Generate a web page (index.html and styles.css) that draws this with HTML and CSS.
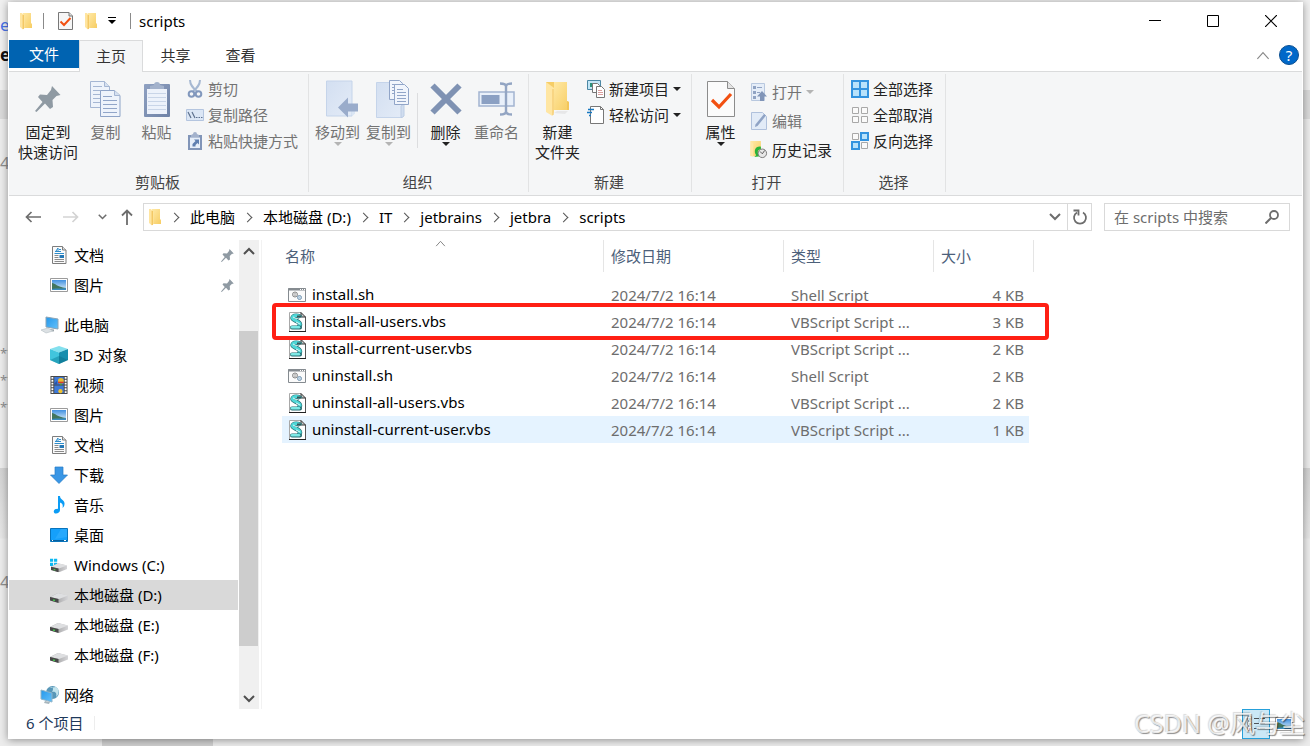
FILE: index.html
```html
<!DOCTYPE html>
<html lang="zh-CN">
<head>
    <meta charset="UTF-8">
    <meta name="viewport" content="width=device-width, initial-scale=1.0">
    <title>scripts</title>
    <link rel="stylesheet" href="styles.css">
</head>
<body>
    <!-- Icon definitions -->
    <svg class="defs" width="0" height="0" aria-hidden="true">
        <defs>
            <linearGradient id="gold" x1="0" y1="0" x2="1" y2="1"><stop offset="0" stop-color="#ffe9a6"/><stop offset="1" stop-color="#f7cd63"/></linearGradient>
            <linearGradient id="pale" x1="0" y1="0" x2="1" y2="1"><stop offset="0" stop-color="#d3dff1"/><stop offset="1" stop-color="#e3ebf7"/></linearGradient>
            <linearGradient id="slate" x1="0" y1="0" x2="1" y2="1"><stop offset="0" stop-color="#8fa1c2"/><stop offset="1" stop-color="#6f82a6"/></linearGradient>
            <linearGradient id="screen" x1="0" y1="0" x2="1" y2="1"><stop offset="0" stop-color="#2497ea"/><stop offset="1" stop-color="#63c1fb"/></linearGradient>
            <linearGradient id="sky" x1="0" y1="0" x2="0" y2="1"><stop offset="0" stop-color="#3f8fe0"/><stop offset="1" stop-color="#dff1fa"/></linearGradient>
            <linearGradient id="drive" x1="0" y1="0" x2="1" y2="0"><stop offset="0" stop-color="#8d8d8d"/><stop offset="1" stop-color="#d5d5d8"/></linearGradient>
        </defs>
        <symbol id="folder" viewBox="0 0 14 18">
            <path d="M4 1h8v10.500h1V16H5z" fill="#f8d36f"/>
            <path d="M4 1h8v11l1 1v3H5z" fill="url(#gold)"/>
            <path d="M1 1h2l2.500 3v12L4 17.500 1 15z" fill="#ffe5a0"/>
            <path d="M4.200 3v14" stroke="#eebc4b" stroke-width="1"/>
        </symbol>
        <symbol id="folder-large" viewBox="0 0 24 36">
            <path d="M7 1h14v19l2 1v8H8z" fill="url(#gold)"/>
            <path d="M21 20l2 1v8h-2z" fill="#f3c65a"/>
            <path d="M0 1h1l7 6v24l-1.500 4L0 31z" fill="#ffe6a3"/>
            <path d="M0 1h8v6z" fill="#f6cd66"/>
            <path d="M7 8v26" stroke="#f1c463"/>
            <path d="M8 32l3-2h11l-3 3z" fill="#ddd" opacity=".6"/>
        </symbol>
        <symbol id="doc-check" viewBox="0 0 28 36">
            <path d="M.5.5h20l7 7v28H.5z" fill="#fbfbfb" stroke="#8c8c8c"/>
            <path d="M20.500.5v7h7" fill="#e4e4e4" stroke="#8c8c8c"/>
            <path d="M5 19l7 7L24 13" fill="none" stroke="#f25011" stroke-width="3.200"/>
        </symbol>
        <symbol id="doc-check-small" viewBox="0 0 15 18">
            <path d="M.5.5H11l3.500 3.500v13.500H.5z" fill="#f6f6f6" stroke="#777"/>
            <path d="M11 .5V4h3.500" fill="#ddd" stroke="#777"/>
            <path d="M2.500 9.500l3.500 3.500 6.500-7" fill="none" stroke="#f25011" stroke-width="2"/>
        </symbol>
        <symbol id="pin" viewBox="0 0 26 26">
            <path d="M17 0l8.500 9-4 1-4 4 .5 7-3 2-5-5.500L1.500 26 0 25l7.500-9L3 11l2-2.500 7 .5 4-5z" fill="#8f9aa3"/>
        </symbol>
        <symbol id="copy" viewBox="0 0 31 36">
            <g fill="#eef3fb" stroke="#a5b6d3">
                <path d="M.5.5h14l5 5v21H.5z"/><path d="M14.500.5v5h5" fill="#d5e0f0"/>
                <path d="M3 5.500h9M3 9.500h13M3 13.500h13M3 17.500h13M3 21.500h13"/>
                <path d="M10.500 9.500h14l5.500 5v21H10.500z" stroke="#8ea3c7"/><path d="M24.500 9.500v5H30" fill="#d5e0f0"/>
                <path d="M13 15.500h9M13 19.500h14M13 23.500h14M13 27.500h14M13 31.500h14" stroke="#91a5c8"/>
            </g>
        </symbol>
        <symbol id="paste" viewBox="0 0 26 36">
            <rect y="3" width="26" height="33" rx="1" fill="url(#slate)"/>
            <path d="M3 8h20v25H3z" fill="#edf2fb"/>
            <path d="M4 12.500h18M4 16.500h18M4 20.500h18M4 24.500h18M4 28.500h18" stroke="#c9d5e8"/>
            <path d="M6 8V5l4-1a3 3 0 0 1 6 0l4 1v3z" fill="#a3b2cc"/>
        </symbol>
        <symbol id="cut" viewBox="0 0 16 18">
            <path d="M3 0c0 5 3 8 7.500 12M13 0c0 5-3 8-7.500 12" fill="none" stroke="#a6b8d2" stroke-width="2"/>
            <g fill="none" stroke="#8298bd" stroke-width="2"><circle cx="4.500" cy="14" r="2.800"/><circle cx="11.500" cy="14" r="2.800"/></g>
        </symbol>
        <symbol id="path" viewBox="0 0 18 12">
            <path d="M.5.5h17v11H.5z" fill="#dbe6f5" stroke="#b4c5df"/>
            <path d="M2 3l3 6M6 3l3 6M10 8.500h1.500M12.500 8.500H14M15 8.500h1.500" stroke="#5e718f" stroke-width="1.200"/>
        </symbol>
        <symbol id="shortcut" viewBox="0 0 14 18">
            <path d="M0 3h14v15H0z" fill="#8195b8"/><path d="M2 5.500h10V16H2z" fill="#e6eef9"/>
            <path d="M3 5V3l2-1a2 2 0 0 1 4 0l2 1v2z" fill="#a3b2cc"/>
            <path d="M4.500 14.500V12l3-3L6 7.500h5v5L9.500 11l-2 2v1.500z" fill="#5f7fb0"/>
        </symbol>
        <symbol id="move-to" viewBox="-8 0 40 37">
            <path d="M.5.500H26v35H.5z" fill="url(#pale)" stroke="#c5d4ea"/><path d="M25 24h4v9l-3 3z" fill="#dbe6f4"/>
            <path d="M12 27l10-10v6h10v8H22v6z" fill="#9aaccb"/>
        </symbol>
        <symbol id="copy-to" viewBox="-8 0 41 38">
            <path d="M.5 2.500H26v35H.5z" fill="url(#pale)" stroke="#c5d4ea"/><path d="M25 26l3-2v12l-2 1.500h-1z" fill="#d0ddef" stroke="#bccce4"/>
            <g fill="#f1f5fc" stroke="#91a5c8">
                <path d="M13.500.5h10l3 3v16h-13z"/><path d="M16 4.500h6M16 7.500h8M16 10.500h8M16 13.500h8"/>
                <path d="M18.500 4.500h10l4 4v16h-14z"/><path d="M21 9.500h6M21 12.500h9M21 15.500h9M21 18.500h9M21 21.500h9"/>
            </g>
        </symbol>
        <symbol id="delete" viewBox="0 0 32 32"><path d="M2.500 2.500l27 27M29.500 2.500l-27 27" stroke="#7f92b3" stroke-width="6"/></symbol>
        <symbol id="rename" viewBox="0 0 37 34">
            <path d="M1 10h35v14H1z" fill="#e9f0fa" stroke="#a2b4d1" stroke-width="1.500"/><path d="M3.500 13h18v9h-18z" fill="#8ba0c3"/>
            <path d="M22 1.500c4 0 6 1 6 3v25c0 2-2 3-6 3M34 1.500c-4 0-6 1-6 3v25c0 2 2 3 6 3" fill="none" stroke="#93a5c3" stroke-width="2.400"/>
        </symbol>
        <symbol id="new-item" viewBox="0 0 18 18">
            <path d="M.5.5h13v9H.5z" fill="#c2e6f7" stroke="#4b87a4"/><path d="M3 3h3v4H3z" fill="#2b927c"/>
            <path d="M5.500 3.500h5l2 2v7h-7z" fill="#fff" stroke="#777"/>
            <path d="M9.500 6.500h5l3 3v8h-8z" fill="#fff" stroke="#777"/><path d="M11 10.500h4M11 12.500h5M11 14.500h5" stroke="#db9d9d"/>
        </symbol>
        <symbol id="easy-access" viewBox="0 0 18 18">
            <path d="M3.500.5h10l3 3v14h-13z" fill="#fff" stroke="#777"/><path d="M13.500.5v3h3" fill="none" stroke="#777"/>
            <path d="M1 3.500h6M0 6.500h5M2 9.500h2" stroke="#1779c2" stroke-width="1.500"/>
        </symbol>
        <symbol id="open" viewBox="0 0 16 18">
            <path d="M.5.5h13v17H.5z" fill="#e5edf8" stroke="#b8c8df"/><path d="M2 3h3v3H2zM2 8h3v3H2zM2 13h3v3H2z" fill="#90a3c3"/><path d="M6 4.500h5M6 9.500h3" stroke="#90a3c3"/>
            <path d="M11 8l5 5.500h-3V18H9v-4.500H6z" fill="#8195b8"/>
        </symbol>
        <symbol id="edit" viewBox="0 0 16 18">
            <path d="M.5.5h11l4 4v13H.5z" fill="#e2ebf7" stroke="#b0c1dc"/><path d="M4 15l.5-2.500L13 2l2 1.500L6.500 14z" fill="#8fa3c5"/>
        </symbol>
        <symbol id="history" viewBox="0 0 18 19">
            <path d="M0 0h11v16H0z" fill="url(#gold)"/><path d="M0 0l3 3v14l-3-2z" fill="#ffe8a8"/>
            <path d="M11 6c-6-1-8 5-5 9l-2 2 6-1v-5l-2 2c-1-2 0-4 3-4z" fill="#28b43a"/>
            <circle cx="12.500" cy="13" r="4.500" fill="#e7e7e7" stroke="#777"/><path d="M10 11l2.500 2.500L15 10" fill="none" stroke="#555"/>
        </symbol>
        <symbol id="select-all" viewBox="0 0 18 18">
            <path d="M0 0h18v18H0z" fill="#3393df"/><path d="M2 2h6v6H2zM10 2h6v6h-6zM2 10h6v6H2zM10 10h6v6h-6z" fill="#b8e2fb"/>
        </symbol>
        <symbol id="select-none" viewBox="0 0 18 18">
            <path d="M1.500 1.500h6v6h-6zM10.500 1.500h6v6h-6zM1.500 10.500h6v6h-6zM10.500 10.500h6v6h-6z" fill="#fafafa" stroke="#a8a8a8"/>
        </symbol>
        <symbol id="select-invert" viewBox="0 0 18 18">
            <path d="M1.500 1.500h6v6h-6zM10.500 10.500h6v6h-6z" fill="#fafafa" stroke="#a8a8a8"/>
            <path d="M10 1h7v7h-7zM1 10h7v7H1z" fill="#b8e2fb" stroke="#3393df" stroke-width="2"/>
        </symbol>
        <symbol id="document" viewBox="0 0 18 18">
            <path d="M2.500.5h10l3.500 3.500v13.500H2.500z" fill="#fbfbfb" stroke="#7d7d7d"/><path d="M12.500.5V4H16" fill="#ddd" stroke="#7d7d7d"/>
            <path d="M6 5l2-3v3.500M9 3.500h2" fill="none" stroke="#2d8ccb"/>
            <path d="M5 5.500h6M4.500 7.500h9.500" stroke="#2d8ccb"/><path d="M4.500 9.500h4M4.500 11.500h4M4.500 13.500h9.500M4.500 15.500h9.500" stroke="#8b8b8b"/><path d="M9.500 9h4.500v3H9.500z" fill="#2577b5"/>
        </symbol>
        <symbol id="picture" viewBox="0 0 18 14">
            <path d="M.5.5h17v13H.5z" fill="#fff" stroke="#9b9b9b"/><path d="M2 2h14v10H2z" fill="url(#sky)"/>
            <path d="M2 5c3 0 5 4 14 5v2H2z" fill="#42765e"/><path d="M2 11c5-1 8 0 14-1v2H2z" fill="#3a8cc0"/>
        </symbol>
        <symbol id="computer" viewBox="0 0 20 18">
            <path d="M6 1l12 2v10L6 11z" fill="url(#screen)" stroke="#8ba5b7"/><path d="M10 13l4 .5v2l-6-1z" fill="#9ba4aa"/>
            <path d="M1 14l7-2 5 3-7 2z" fill="#dce1e4" stroke="#b4bdc2" stroke-width=".6"/>
        </symbol>
        <symbol id="cube" viewBox="0 0 18 18">
            <path d="M9 0l9 3-9 3.500L0 3z" fill="#83e0ee"/><path d="M0 3l9 3.500V18l-9-4z" fill="#41c5dd"/><path d="M18 3L9 6.500V18l9-4z" fill="#168eae"/><path d="M0 14l9-4v8z" fill="#0b819c" opacity=".5"/><path d="M9 10l9 4-9 4z" fill="#0b6f8a" opacity=".5"/>
        </symbol>
        <symbol id="video" viewBox="0 0 18 19">
            <path d="M0 0h18v19H0z" fill="#484848"/><path d="M4 1h10v8H4zM4 10h10v8H4z" fill="#3d79d8"/>
            <path d="M2 1v18M16 1v18" stroke="#fff" stroke-width="2" stroke-dasharray="2 1"/>
            <circle cx="11" cy="5" r="3" fill="#e7bd2d"/><path d="M8 6h6v1.500H8z" fill="#d9382d"/><path d="M10 8h2v2h-2z" fill="#48953f"/><circle cx="10.500" cy="16" r="2.200" fill="#f1c22f"/><path d="M4 8l3-3v4H4z" fill="#2b55a5"/>
        </symbol>
        <symbol id="download" viewBox="0 0 18 18"><path d="M5 1h8v8h4.500L9 17.500.5 9H5z" fill="#3996e5" stroke="#277bc5" stroke-width=".7"/></symbol>
        <symbol id="music" viewBox="0 0 18 18"><path d="M8 0h2c0 4 5 4 4.500 8 0 2-1 3-2 4 1-4-1-5-2.500-5.500V14c0 2-2 3.500-4 3.500-3 0-3-4 0-4.500l2-.2z" fill="#0b9cf5"/></symbol>
        <symbol id="desktop" viewBox="0 0 18 14">
            <path d="M.5.5h17v13H.5z" fill="#15a0fb" stroke="#0874bc"/><path d="M11 1h6v8L5 11z" fill="#39b2ff" opacity=".5"/><path d="M1 12.500h16" stroke="#075f9e"/><path d="M2 12.500h1M14 12.500h2" stroke="#fff"/>
        </symbol>
        <symbol id="disk" viewBox="0 0 18 10">
            <path d="M0 4l8-4 10 2.500v4L9 10 0 7z" fill="url(#drive)"/><path d="M0 4l8-4 10 2.500L9 6z" fill="#dedfe1"/>
            <path d="M0 4l8.500 2v4L0 7.500z" fill="#474747"/><path d="M3 7l2 .5" stroke="#45c14f" stroke-width="1.500"/>
        </symbol>
        <symbol id="system-disk" viewBox="0 0 20 16">
            <path d="M0 1h3.500v3.500H0zM4.500 1H8v3.500H4.500zM0 5.500h3.500V9H0zM4.500 5.500H8V9H4.500z" fill="#0bb8f1"/>
            <svg x="1" y="6" width="18" height="10" viewBox="0 0 18 10"><use href="#disk"/></svg>
        </symbol>
        <symbol id="network" viewBox="0 0 20 18">
            <circle cx="12.500" cy="6.500" r="6.500" fill="#5897b8"/><path d="M9 2c4-2 5 1 3 4 4-1 5 2 4 5 3-2 4-8 0-10z" fill="#c2e3ec"/>
            <path d="M1 4l11 3v9L1 13z" fill="url(#screen)" stroke="#8db3c8"/><path d="M5 15l5 1-1 2-5-1z" fill="#a8b6bd"/>
        </symbol>
        <symbol id="shell" viewBox="0 0 18 14">
            <path d="M.5.5h17v13H.5z" fill="#fbfbfb" stroke="#858b90"/><path d="M0 1.500h18" stroke="#858b90" stroke-width="2"/><path d="M12 1.500h1M14 1.500h1M16 1.500h1" stroke="#fff"/>
            <circle cx="7" cy="6.500" r="2.500" fill="#eee" stroke="#858585"/><circle cx="7" cy="6.500" r="1" fill="#fff" stroke="#858585" stroke-width=".6"/>
            <circle cx="11.500" cy="9.500" r="2" fill="#dceefa" stroke="#7494b0"/><circle cx="11.500" cy="9.500" r=".6" fill="#fff" stroke="#7494b0" stroke-width=".5"/>
        </symbol>
        <symbol id="vbs" viewBox="0 0 18 20">
            <path d="M1 0h12l4 4v15H1z" fill="#fff"/><path d="M1.500 19V.5H13" fill="none" stroke="#a8a8a8"/>
            <path d="M17.500 5v14.500" stroke="#555"/><path d="M1 19.500h17" stroke="#222"/><path d="M13 .5l4.500 4.500H13z" fill="#ccc" stroke="#333"/>
            <path d="M12.500 5.500C11 3 5 3 4.500 6c0 2.500 7.500 3 7.500 6.500 0 1.500-1 2-2 2.500" fill="none" stroke="#2d7478" stroke-width="4.500"/>
            <path d="M12 5.500C11 3 5 3 4.500 6c0 2.500 7.500 3 7.500 6.500 0 1.500-1 2-2 2.500" fill="none" stroke="#4fd8d8" stroke-width="3.200"/>
            <path d="M4 15.500h8" stroke="#236b70" stroke-width="4" stroke-linecap="round"/><path d="M4 15.200h7" stroke="#7de9e6" stroke-width="2.500" stroke-linecap="round"/>
            <path d="M9 3.500h4v2H9z" fill="#3b5557"/><path d="M5 5l4 2M8 10l4 2" stroke="#fff" stroke-width=".8"/>
        </symbol>
        <symbol id="details" viewBox="0 0 18 16">
            <path d="M0 0h5v16H0z" fill="#fff"/><path d="M.5.5h4v4h-4zM.5 5.500h4v4h-4zM.5 10.500h4v4h-4z" fill="#fff" stroke="#999"/>
            <path d="M2 2h2v2H2z" fill="#2c78b8"/><path d="M2 7h2v2H2z" fill="#a58a19"/><path d="M2 12h2v2H2z" fill="#cc3d25"/>
            <path d="M7 2.500h5M13 2.500h5M7 7.500h5M13 7.500h5M7 12.500h5M13 12.500h5" stroke="#4f5457"/>
        </symbol>
        <symbol id="chevron-down" viewBox="0 0 12 8"><path d="M1 1l5 5 5-5" fill="none" stroke="currentColor" stroke-width="2"/></symbol>
        <symbol id="chevron-up" viewBox="0 0 12 8"><path d="M1 7l5-5 5 5" fill="none" stroke="currentColor" stroke-width="2"/></symbol>
        <symbol id="caret-up" viewBox="0 0 12 8"><path d="M1 7l5-5.500L11 7" fill="none" stroke="currentColor"/></symbol>
        <symbol id="arrow-left" viewBox="0 0 16 12"><path d="M16 6H1.500M6.500 1l-5 5 5 5" fill="none" stroke="currentColor" stroke-width="1.700"/></symbol>
        <symbol id="arrow-right" viewBox="0 0 16 12"><path d="M0 6h14.500M9.500 1l5 5-5 5" fill="none" stroke="currentColor" stroke-width="1.700"/></symbol>
        <symbol id="arrow-up" viewBox="0 0 12 16"><path d="M6 16V1.500M1 6.500l5-5 5 5" fill="none" stroke="currentColor" stroke-width="1.800"/></symbol>
    </svg>

    <!-- Page behind the window -->
    <div class="backdrop" aria-hidden="true">
        <span class="scrap link">e</span>
        <span class="scrap bold">e</span>
        <span class="scrap num">4</span>
        <span class="scrap stars">**</span>
        <span class="scrap stars">**</span>
        <span class="scrap stars">**</span>
        <span class="scrap num low">4</span>
    </div>

    <div class="window">
        <header class="title-bar">
            <svg class="quick-folder"><use href="#folder"/></svg>
            <span class="line"></span>
            <button class="quick" aria-label="属性"><svg class="quick-check"><use href="#doc-check-small"/></svg></button>
            <button class="quick" aria-label="新建文件夹"><svg class="quick-folder"><use href="#folder"/></svg></button>
            <button class="quick more" aria-label="自定义快速访问工具栏"><svg width="8" height="8" viewBox="0 0 8 8"><path d="M0 .5h8" stroke="#000"/><path d="M0 3h8L4 7z"/></svg></button>
            <span class="line"></span>
            <h1>scripts</h1>
            <div class="controls">
                <button aria-label="最小化"><svg width="12" height="12" viewBox="0 0 12 12"><path d="M0 5.500h12" stroke="#000"/></svg></button>
                <button aria-label="最大化"><svg width="12" height="12" viewBox="0 0 12 12"><path d="M.5.5h11v11H.5z" fill="none" stroke="#000"/></svg></button>
                <button aria-label="关闭"><svg width="12" height="12" viewBox="0 0 12 12"><path d="M0 0l12 12M12 0L0 12" stroke="#000" stroke-width="1.200"/></svg></button>
            </div>
        </header>

        <nav class="tabs">
            <button class="tab file">文件</button>
            <button class="tab active">主页</button>
            <button class="tab">共享</button>
            <button class="tab">查看</button>
            <button class="collapse" aria-label="最小化功能区"><svg width="14" height="9"><use href="#caret-up"/></svg></button>
            <button class="help" aria-label="帮助">?</button>
        </nav>

        <!-- Ribbon -->
        <div class="ribbon">
            <section class="group clipboard">
                <div class="tools">
                    <button class="big wide"><svg width="26" height="36"><use href="#pin"/></svg>固定到<br>快速访问</button>
                    <button class="big off"><svg width="31" height="36"><use href="#copy"/></svg>复制</button>
                    <button class="big off"><svg width="26" height="36"><use href="#paste"/></svg>粘贴</button>
                    <div class="list">
                        <button class="small off"><svg><use href="#cut"/></svg>剪切</button>
                        <button class="small off"><svg><use href="#path"/></svg>复制路径</button>
                        <button class="small off"><svg><use href="#shortcut"/></svg>粘贴快捷方式</button>
                    </div>
                </div>
                <h2>剪贴板</h2>
            </section>
            <section class="group organize">
                <div class="tools">
                    <button class="big off"><svg width="40" height="37"><use href="#move-to"/></svg>移动到<i class="arrow"></i></button>
                    <button class="big off"><svg width="41" height="38"><use href="#copy-to"/></svg>复制到<i class="arrow"></i></button>
                    <span class="split"></span>
                    <button class="big"><svg width="32" height="32"><use href="#delete"/></svg>删除<i class="arrow"></i></button>
                    <button class="big off"><svg width="37" height="34"><use href="#rename"/></svg>重命名</button>
                </div>
                <h2>组织</h2>
            </section>
            <section class="group new">
                <div class="tools">
                    <button class="big"><svg width="24" height="36"><use href="#folder-large"/></svg>新建<br>文件夹</button>
                    <div class="list">
                        <button class="small"><svg><use href="#new-item"/></svg>新建项目<i class="arrow"></i></button>
                        <button class="small"><svg><use href="#easy-access"/></svg>轻松访问<i class="arrow"></i></button>
                    </div>
                </div>
                <h2>新建</h2>
            </section>
            <section class="group open">
                <div class="tools">
                    <button class="big"><svg width="28" height="36"><use href="#doc-check"/></svg>属性<i class="arrow"></i></button>
                    <div class="list loose">
                        <button class="small off"><svg><use href="#open"/></svg>打开<i class="arrow"></i></button>
                        <button class="small off"><svg><use href="#edit"/></svg>编辑</button>
                        <button class="small"><svg><use href="#history"/></svg>历史记录</button>
                    </div>
                </div>
                <h2>打开</h2>
            </section>
            <section class="group select">
                <div class="tools">
                    <div class="list">
                        <button class="small"><svg><use href="#select-all"/></svg>全部选择</button>
                        <button class="small"><svg><use href="#select-none"/></svg>全部取消</button>
                        <button class="small"><svg><use href="#select-invert"/></svg>反向选择</button>
                    </div>
                </div>
                <h2>选择</h2>
            </section>
        </div>

        <!-- Address bar -->
        <div class="address-row">
            <div class="history">
                <button aria-label="后退"><svg width="16" height="12"><use href="#arrow-left"/></svg></button>
                <button class="disabled" aria-label="前进"><svg width="16" height="12"><use href="#arrow-right"/></svg></button>
                <button class="recent" aria-label="最近浏览的位置"><svg width="9" height="6"><use href="#chevron-down"/></svg></button>
                <button class="up" aria-label="上移"><svg width="12" height="16"><use href="#arrow-up"/></svg></button>
            </div>
            <div class="address">
                <svg class="quick-folder"><use href="#folder"/></svg>
                <ol class="crumbs">
                    <li><a href="#">此电脑</a></li>
                    <li><a href="#">本地磁盘 (D:)</a></li>
                    <li><a href="#">IT</a></li>
                    <li><a href="#">jetbrains</a></li>
                    <li><a href="#">jetbra</a></li>
                    <li><a href="#">scripts</a></li>
                </ol>
                <button class="drop" aria-label="以前的位置"><svg width="12" height="8"><use href="#chevron-down"/></svg></button>
                <button class="refresh" aria-label="刷新"><svg width="16" height="16" viewBox="0 0 16 16"><path d="M5 3.500a6 6 0 1 0 6 0M1.500 1.500h5v5" fill="none" stroke="#6d6d6d" stroke-width="1.800"/></svg></button>
            </div>
            <form class="search">
                <input type="search" placeholder="在 scripts 中搜索" aria-label="在 scripts 中搜索">
                <svg width="14" height="14" viewBox="0 0 14 14"><circle cx="9" cy="5" r="4" fill="none" stroke="#6d6d6d" stroke-width="1.800"/><path d="M6 8l-5.500 5.500" stroke="#6d6d6d" stroke-width="2"/></svg>
            </form>
        </div>

        <div class="content">
            <nav class="tree">
                <a href="#"><svg><use href="#document"/></svg>文档<svg class="pinned"><use href="#pin"/></svg></a>
                <a href="#"><svg><use href="#picture"/></svg>图片<svg class="pinned"><use href="#pin"/></svg></a>
                <a href="#" class="root"><svg><use href="#computer"/></svg>此电脑</a>
                <a href="#"><svg><use href="#cube"/></svg>3D 对象</a>
                <a href="#"><svg><use href="#video"/></svg>视频</a>
                <a href="#"><svg><use href="#picture"/></svg>图片</a>
                <a href="#"><svg><use href="#document"/></svg>文档</a>
                <a href="#"><svg><use href="#download"/></svg>下载</a>
                <a href="#"><svg><use href="#music"/></svg>音乐</a>
                <a href="#"><svg><use href="#desktop"/></svg>桌面</a>
                <a href="#"><svg><use href="#system-disk"/></svg>Windows (C:)</a>
                <a href="#" class="current"><svg class="disk"><use href="#disk"/></svg>本地磁盘 (D:)</a>
                <a href="#"><svg class="disk"><use href="#disk"/></svg>本地磁盘 (E:)</a>
                <a href="#"><svg class="disk"><use href="#disk"/></svg>本地磁盘 (F:)</a>
                <a href="#" class="root"><svg><use href="#network"/></svg>网络</a>
            </nav>
            <div class="scrollbar">
                <button aria-label="向上滚动"><svg width="12" height="8"><use href="#chevron-up"/></svg></button>
                <div class="track"><div class="thumb"></div></div>
                <button aria-label="向下滚动"><svg width="12" height="8"><use href="#chevron-down"/></svg></button>
            </div>
            <main class="files">
                <div class="file-list">
                    <table>
                        <thead>
                            <tr>
                                <th class="name"><div>名称<svg class="sort"><use href="#caret-up"/></svg></div></th>
                                <th class="date"><div>修改日期</div></th>
                                <th class="type"><div>类型</div></th>
                                <th class="size"><div>大小</div></th>
                            </tr>
                        </thead>
                        <tbody>
                            <tr><td><svg><use href="#shell"/></svg>install.sh</td><td>2024/7/2 16:14</td><td>Shell Script</td><td>4 KB</td></tr>
                            <tr><td><svg><use href="#vbs"/></svg>install-all-users.vbs</td><td>2024/7/2 16:14</td><td>VBScript Script ...</td><td>3 KB</td></tr>
                            <tr><td><svg><use href="#vbs"/></svg>install-current-user.vbs</td><td>2024/7/2 16:14</td><td>VBScript Script ...</td><td>2 KB</td></tr>
                            <tr><td><svg><use href="#shell"/></svg>uninstall.sh</td><td>2024/7/2 16:14</td><td>Shell Script</td><td>2 KB</td></tr>
                            <tr><td><svg><use href="#vbs"/></svg>uninstall-all-users.vbs</td><td>2024/7/2 16:14</td><td>VBScript Script ...</td><td>2 KB</td></tr>
                            <tr class="hovered"><td><svg><use href="#vbs"/></svg>uninstall-current-user.vbs</td><td>2024/7/2 16:14</td><td>VBScript Script ...</td><td>1 KB</td></tr>
                        </tbody>
                    </table>
                    <div class="highlight"></div>
                </div>
            </main>
        </div>

        <footer class="status">
            <span class="count">6 个项目</span>
            <div class="views">
                <button class="on" aria-label="详细信息"><svg width="18" height="16"><use href="#details"/></svg></button>
                <button aria-label="大缩略图"><svg width="18" height="14"><use href="#picture"/></svg></button>
            </div>
        </footer>
    </div>
    <div class="watermark">CSDN @风与尘</div>
</body>
</html>
```
FILE: styles.css
```css
* {
    box-sizing: border-box;
}

body {
    margin: 0;
    height: 100vh;
    padding: 2px 7px 7px 8px;
    overflow: hidden;
    position: relative;
    font-family: "Noto Sans", "Noto Sans CJK SC", sans-serif;
    font-size: 15px;
    line-height: 20px;
    color: #000;
    background: #e6e6e6;
}

.defs {
    position: absolute;
}

svg {
    flex: none;
}

button {
    border: none;
    padding: 0;
    background: none;
    font: inherit;
    color: inherit;
    display: flex;
    flex: none;
    align-items: center;
    justify-content: center;
}

a {
    color: inherit;
    text-decoration: none;
}

/* Page behind */
.backdrop {
    position: absolute;
    inset: 0;
    overflow: hidden;
    background: linear-gradient(#f0f0f0 0 90px, #dadada 90px 119px, #ececec 119px 468px, #d3d3d3 468px, #e6e6e6 538px, #ececec 539px);
}

.backdrop::after {
    content: "";
    position: absolute;
    left: 102px;
    bottom: 0;
    width: 111px;
    height: 8px;
    background: #cfcfcf;
}

.scrap {
    position: absolute;
    left: 0;
    font-size: 17px;
    color: #8f8f8f;
}

.scrap.link {
    top: 15px;
    color: #4a73e8;
}

.scrap.bold {
    top: 45px;
    color: #111;
    font-weight: bold;
}

.scrap.num {
    top: 153px;
}

.scrap.low {
    top: 572px;
}

.scrap.stars {
    top: 343px;
    font-size: 13px;
}

.scrap.stars + .stars {
    top: 370px;
}

.scrap.stars + .stars + .stars {
    top: 397px;
}

/* Window */
.window {
    position: relative;
    height: 100%;
    padding: 0 1px;
    display: flex;
    flex-direction: column;
    background: #fff;
    box-shadow: 0 1px 8px rgba(0, 0, 0, 0.4);
}

.title-bar {
    height: 38px;
    flex: none;
    display: flex;
    align-items: center;
    padding-left: 10px;
}

.title-bar .line {
    width: 1px;
    height: 16px;
    margin: 0 8px 0 10px;
    background: #8a8a8a;
}

.quick-folder {
    width: 14px;
    height: 18px;
}

.quick {
    width: 26px;
    height: 24px;
}

.quick.more {
    width: 16px;
}

.quick-check {
    width: 15px;
    height: 18px;
}

h1 {
    margin: 0;
    font-size: 15px;
    font-weight: normal;
}

.controls {
    margin: 0 2px 0 auto;
    display: flex;
}

.controls button {
    width: 58px;
    height: 38px;
}

/* Tabs */
.tabs {
    flex: none;
    height: 32px;
    display: flex;
    border-bottom: 1px solid #dadbdc;
}

.tab {
    width: 65px;
    height: 30px;
    color: #333;
}

.tab.file {
    width: 70px;
    height: 28px;
    background: #0063b1;
    color: #fff;
}

.tab.active {
    width: 64px;
    height: 32px;
    padding-bottom: 2px;
    border: 1px solid #dadbdc;
    border-bottom: none;
    background: #f5f6f7;
}

.collapse {
    width: 30px;
    height: 30px;
    margin-left: auto;
    color: #888;
}

.help {
    width: 20px;
    height: 20px;
    margin: 5px 3px 0 1px;
    border: 1px solid #0b4f91;
    border-radius: 50%;
    background: #0068c9;
    color: #fff;
}

/* Ribbon */
.ribbon {
    flex: none;
    height: 124px;
    padding: 2px 0 3px;
    display: flex;
    background: #f5f6f7;
    border-bottom: 1px solid #dadbdc;
}

.group {
    display: flex;
    flex-direction: column;
    justify-content: space-between;
    border-right: 1px solid #e2e3e4;
}

.group h2 {
    margin: 0;
    padding-right: 2px;
    font-size: 15px;
    font-weight: normal;
    text-align: center;
    color: #444;
}

.clipboard {
    width: 300px;
}

.organize {
    width: 220px;
}

.new {
    width: 163px;
}

.open {
    width: 152px;
}

.select {
    width: 102px;
}

.tools {
    display: flex;
    padding: 0 3px;
}

.big {
    width: 51px;
    flex-direction: column;
    justify-content: flex-start;
    padding-top: 6px;
    color: #222;
    white-space: nowrap;
}

.big.wide {
    width: 68px;
    padding-left: 4px;
}

.big > svg {
    height: 38px;
    margin-bottom: 4px;
}

.off,
.small.off {
    color: #737373;
}

.arrow {
    width: 0;
    height: 0;
    border: 4px solid transparent;
    border-top-color: #222;
    border-bottom: none;
}

.off .arrow {
    border-top-color: #b4b4b4;
}

.split {
    width: 1px;
    height: 55px;
    margin: 19px 2px 0 3px;
    background: #dcdddf;
}

.list {
    display: flex;
    flex-direction: column;
    margin-left: 4px;
    padding-top: 2px;
}

.list.loose {
    gap: 3px;
    padding-top: 5px;
}

.small {
    height: 26px;
    justify-content: flex-start;
    gap: 4px;
    color: #222;
    white-space: nowrap;
}

.small svg {
    width: 18px;
    height: 18px;
}

/* Address bar */
.address-row {
    flex: none;
    height: 44px;
    padding: 7px 12px 9px 0;
    display: flex;
    gap: 12px;
}

.history {
    display: flex;
    width: 122px;
    padding-left: 5px;
    color: #6d6d6d;
}

.history button {
    width: 38px;
}

.history .disabled {
    color: #d3d3d3;
}

.history .recent {
    width: 24px;
}

.history .up {
    width: 26px;
}

.address {
    flex: 1;
    display: flex;
    align-items: center;
    padding-left: 4px;
    border: 1px solid #d9d9d9;
}

.crumbs {
    display: flex;
    margin: 0;
    padding: 0;
    list-style: none;
}

.crumbs li {
    display: flex;
    align-items: center;
}

.crumbs li::before {
    content: "";
    width: 6px;
    height: 6px;
    margin: 0 12px 0 9px;
    border-top: 1px solid #555;
    border-right: 1px solid #555;
    transform: rotate(45deg);
}

.drop {
    width: 24px;
    height: 26px;
    margin-left: auto;
    color: #6d6d6d;
}

.refresh {
    width: 24px;
    height: 26px;
    border-left: 1px solid #d9d9d9;
}

.search {
    width: 186px;
    display: flex;
    align-items: center;
    padding: 0 10px 0 9px;
    border: 1px solid #d9d9d9;
}

.search input {
    flex: 1;
    min-width: 0;
    padding: 0;
    border: none;
    outline: none;
    background: none;
    font: inherit;
}

.search input::placeholder {
    color: #6d6d6d;
}

/* Content */
.content {
    flex: 1;
    min-height: 0;
    display: flex;
}

.tree {
    width: 230px;
    padding-right: 1px;
    overflow: hidden;
}

.tree a {
    height: 30px;
    padding-left: 41px;
    display: flex;
    align-items: center;
    gap: 6px;
}

.tree .root {
    margin-top: 10px;
    padding-left: 31px;
    gap: 4px;
}

.tree .current {
    background: #d9d9d9;
}

.tree svg {
    width: 18px;
    height: 18px;
}

.tree .root svg {
    width: 20px;
}

.tree .disk {
    padding-top: 6px;
}

.tree .pinned {
    width: 13px;
    height: 13px;
    margin: 0 4px 0 auto;
}

.scrollbar {
    width: 20px;
    display: flex;
    flex-direction: column;
    background: #f0f0f0;
    color: #505050;
}

.scrollbar button {
    height: 21px;
}

.track {
    flex: 1;
    padding: 70px 1px 0 0;
}

.thumb {
    height: 315px;
    background: #cdcdcd;
}

.files {
    flex: 1;
    margin-left: 2px;
    padding-left: 20px;
    border-left: 1px solid #f2f2f2;
}

.file-list {
    position: relative;
    width: 752px;
}

table {
    width: 100%;
    table-layout: fixed;
    border-collapse: separate;
    border-spacing: 0;
    color: #6d6d6d;
}

th {
    height: 41px;
    padding: 0;
    vertical-align: top;
    text-align: left;
    font-weight: normal;
    color: #4c607a;
}

th div {
    position: relative;
    height: 32px;
    padding-left: 7px;
    line-height: 32px;
    border-right: 1px solid #e5e5e5;
}

.name {
    width: 322px;
}

.name div {
    padding-left: 3px;
}

.date {
    width: 180px;
}

.type {
    width: 150px;
}

.sort {
    position: absolute;
    top: 0;
    left: 153px;
    width: 11px;
    height: 7px;
    color: #777;
}

td {
    height: 27px;
    padding: 0 7px;
    white-space: nowrap;
}

td:first-child {
    padding: 0 6px;
    color: #000;
}

td:last-child {
    padding-right: 5px;
    border-right: 5px solid #fff;
    text-align: right;
}

td svg {
    width: 18px;
    height: 20px;
    margin-right: 6px;
    vertical-align: middle;
}

.hovered td {
    background: #e5f3ff;
}

.highlight {
    position: absolute;
    top: 63px;
    left: -10px;
    width: 777px;
    height: 37px;
    border: 4px solid #ff1f14;
    border-radius: 4px;
}

/* Status bar */
.status {
    flex: none;
    height: 30px;
    display: flex;
    align-items: flex-start;
    justify-content: space-between;
    padding: 0 4px 0 17px;
    color: #1e395b;
}

.count {
    margin-top: 7px;
    padding-right: 11px;
    border-right: 1px solid #ededed;
    line-height: 14px;
}

.views {
    display: flex;
    height: 100%;
}

.views button {
    width: 28px;
}

.views .on {
    border: 1px solid #26a0da;
    background: #cbe8f6;
}

.watermark {
    position: absolute;
    right: 5px;
    bottom: 8px;
    font-size: 25px;
    line-height: 30px;
    color: rgba(255, 255, 255, 0.8);
    text-shadow: 1px 1px 1px rgba(0, 0, 0, 0.45), -1px -1px 1px rgba(0, 0, 0, 0.15);
}
```
